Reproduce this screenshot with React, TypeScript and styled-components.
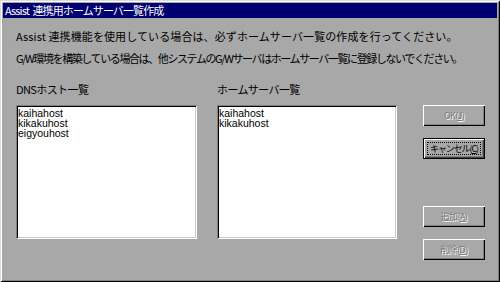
import React from 'react';
import styled, { createGlobalStyle } from 'styled-components';

const GlobalStyle = createGlobalStyle`
  html, body {
    margin: 0;
    padding: 0;
    background: #a8a8a8;
  }
  body {
    font-family: "Noto Sans CJK JP", "Liberation Sans", sans-serif;
  }
`;

const Window = styled.div`
  width: 500px;
  height: 282px;
  box-sizing: border-box;
  padding: 3px;
  background: #a8a8a8;
  box-shadow:
    inset 1px 1px 0 #dcdcdc,
    inset -1px -1px 0 #000,
    inset 2px 2px 0 #fff,
    inset -2px -2px 0 #808080;
  display: flex;
  flex-direction: column;
  overflow: hidden;
`;

const TitleBar = styled.div`
  height: 15px;
  background: #000070;
  color: #fff;
  font-size: 11px;
  letter-spacing: -0.9px;
  word-spacing: 2px;
  line-height: 15px;
  padding-left: 2px;
  white-space: nowrap;
`;

const Body = styled.div`
  padding: 7px 0 0 13px;
`;

const Message = styled.div<{ $tight?: number }>`
  font-size: 11px;
  letter-spacing: ${(p) => p.$tight ?? 0.1}px;
  line-height: 22px;
  color: #000;
  white-space: nowrap;
`;

const Content = styled.div`
  display: flex;
  margin-top: 13px;
`;

const ListColumn = styled.div<{ $width: number; $gap: number }>`
  width: ${(p) => p.$width}px;
  margin-right: ${(p) => p.$gap}px;
  display: flex;
  flex-direction: column;
`;

const Label = styled.div`
  font-size: 11px;
  letter-spacing: -0.6px;
  line-height: 14px;
  height: 14px;
  margin-bottom: 9px;
  white-space: nowrap;
`;

const ListBox = styled.ul`
  list-style: none;
  margin: 0;
  height: 134px;
  box-sizing: border-box;
  padding: 3px 2px;
  background: #fff;
  box-shadow:
    inset 1px 1px 0 #808080,
    inset -1px -1px 0 #fff,
    inset 2px 2px 0 #000,
    inset -2px -2px 0 #c8c8c8;
`;

const ListItem = styled.li`
  font-family: "Liberation Sans", sans-serif;
  font-size: 10.5px;
  line-height: 10px;
  height: 10px;
  color: #000;
`;

const ButtonColumn = styled.div`
  display: flex;
  flex-direction: column;
  padding-top: 23px;
`;

const Button = styled.button<{ $top?: number; $default?: boolean }>`
  width: 62px;
  height: 21px;
  margin: ${(p) => p.$top ?? 0}px 0 0 0;
  padding: 0;
  border: none;
  background: #a8a8a8;
  font-family: "Noto Sans CJK JP", sans-serif;
  font-size: 9px;
  letter-spacing: ${(p) => (p.$default ? -1.1 : -0.6)}px;
  white-space: nowrap;
  line-height: 21px;
  color: ${(p) => (p.$default ? '#000' : '#787878')};
  text-shadow: ${(p) => (p.$default ? 'none' : '1px 1px 0 #fff')};
  position: relative;
  box-shadow: ${(p) =>
    p.$default
      ? 'inset 0 0 0 1px #000, inset 2px 2px 0 #fff, inset -2px -2px 0 #404040, inset -3px -3px 0 #808080'
      : 'inset 1px 1px 0 #fff, inset -1px -1px 0 #000, inset -2px -2px 0 #808080'};

  u {
    text-decoration: underline;
  }
`;

const FocusRing = styled.span`
  position: absolute;
  left: 4px;
  top: 4px;
  right: 4px;
  bottom: 4px;
  border: 1px dotted #000;
`;

const App = () => {
  return (
    <>
      <GlobalStyle />
      <Window>
        <TitleBar>Assist 連携用ホームサーバ一覧作成</TitleBar>
        <Body>
          <Message>Assist 連携機能を使用している場合は、必ずホームサーバ一覧の作成を行ってください。</Message>
          <Message $tight={-1.4}>G/W環境を構築している場合は、他システムのG/Wサーバはホームサーバ一覧に登録しないでください。</Message>
          <Content>
            <ListColumn $width={181} $gap={20}>
              <Label>DNSホスト一覧</Label>
              <ListBox>
                <ListItem>kaihahost</ListItem>
                <ListItem>kikakuhost</ListItem>
                <ListItem>eigyouhost</ListItem>
              </ListBox>
            </ListColumn>
            <ListColumn $width={180} $gap={26}>
              <Label>ホームサーバ一覧</Label>
              <ListBox>
                <ListItem>kaihahost</ListItem>
                <ListItem>kikakuhost</ListItem>
              </ListBox>
            </ListColumn>
            <ButtonColumn>
              <Button disabled>
                OK(<u>J</u>)
              </Button>
              <Button $top={12} $default>
                <FocusRing />
                キャンセル(<u>C</u>)
              </Button>
              <Button $top={47} disabled>
                追加(<u>A</u>)
              </Button>
              <Button $top={12} disabled>
                削除(<u>D</u>)
              </Button>
            </ButtonColumn>
          </Content>
        </Body>
      </Window>
    </>
  );
};

export default App;
